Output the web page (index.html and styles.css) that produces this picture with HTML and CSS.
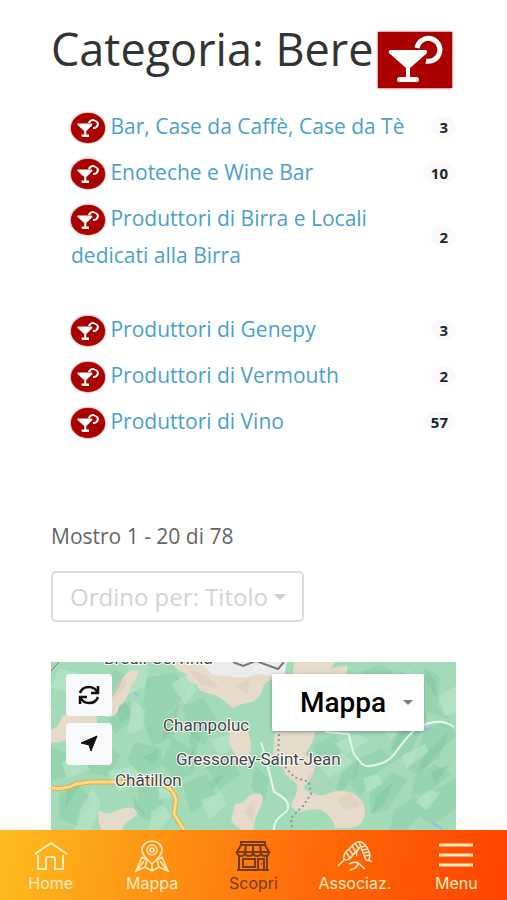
FILE: index.html
```
<!DOCTYPE html>
<html lang="it">
<head>
  <meta charset="UTF-8" />
  <meta name="viewport" content="width=device-width, initial-scale=1.0"/>
  <title>Categoria: Bere</title>
  <link rel="stylesheet" href="styles.css">
</head>
<body>

  <!-- shared cocktail glass -->
  <svg class="defs" width="0" height="0" aria-hidden="true">
    <symbol id="drink" viewBox="0 0 74 56">
      <path d="M39 16a11.500 11.500 0 1 1 9 13" fill="none" stroke="#fff" stroke-width="5"/>
      <path d="M12 18h36q2 2 0 4L32 36v9h6q3 0 3 2.500t-3 2.500H22q-3 0-3-2.500t3-2.500h6v-9L11 21q-1-2 1-3z" fill="#fff"/>
    </symbol>
    <symbol id="drink-small" viewBox="0 0 26 20">
      <path d="M14 5a4.500 4 0 1 1 4 5" fill="none" stroke="#fff" stroke-width="2.200"/>
      <path d="M2.500 5.500h14.500l.5 1.500-6.200 6v3.500h2.700v2.500H6.500v-2.500h2.700V13L2.500 7z" fill="#fff"/>
    </symbol>
  </svg>

  <main>
    <h1>Categoria: Bere <svg class="cat-icon"><use href="#drink"/></svg></h1>

    <ul class="categories">
      <li><a href="#bar"><svg class="dot"><use href="#drink-small"/></svg> Bar, Case da Caffè, Case da Tè</a><span class="badge">3</span></li>
      <li><a href="#enoteche"><svg class="dot"><use href="#drink-small"/></svg> Enoteche e Wine Bar</a><span class="badge">10</span></li>
      <li class="tall"><a href="#birra"><svg class="dot"><use href="#drink-small"/></svg> Produttori di Birra e Locali dedicati alla Birra</a><span class="badge">2</span></li>
      <li><a href="#genepy"><svg class="dot"><use href="#drink-small"/></svg> Produttori di Genepy</a><span class="badge">3</span></li>
      <li><a href="#vermouth"><svg class="dot"><use href="#drink-small"/></svg> Produttori di Vermouth</a><span class="badge">2</span></li>
      <li><a href="#vino"><svg class="dot"><use href="#drink-small"/></svg> Produttori di Vino</a><span class="badge">57</span></li>
    </ul>

    <p class="results">Mostro 1 - 20 di 78</p>

    <div class="sort">
      <select aria-label="Ordinamento">
        <option>Ordino per: Titolo</option>
      </select>
    </div>

    <section class="map" aria-label="Mappa">
      <svg class="terrain" viewBox="0 0 405 168" preserveAspectRatio="xMidYMin slice">
        <rect width="405" height="168" fill="#a3dbb9"/>
        <!-- shaded valleys -->
        <g fill="#8fcfaa" opacity=".6">
          <path d="M62 8l18 6-8 24 12 18-20 16-10-22zM96 16l28-6 12 22-20 20 8 22-22 10-12-30zM132 44l20-8 14 20-12 28-18-14zM30 94l22-14 18 14-14 20-26-4zM84 80l26 6 2 18-22 8-14-14zM122 76l24 14-4 22-18 6-14-18z"/>
          <path d="M0 84l16 8 4 22-20 4zM8 132l20-8 14 14-16 26-18-8zM88 124l16-4 10 22-14 18-14-14zM132 122l24-10 8 20-24 20zM152 100l26-6 12 18-22 16zM204 104l14 12-4 24-14-14z"/>
          <path d="M262 84l22-12 6 20-18 14zM306 98l24-12 14 12-22 16-12 20-10-10zM340 80l18-22 14 4-12 28-18 10zM376 66l22-8 7 16-20 18-16 22-12-6zM318 132l24-22 14 8-20 30-16 4zM364 114l20-12 16 10-22 18-18 4z"/>
          <path d="M376 6l14 10-4 28 14 14-24-8zM384 128l21-12v30l-22 16-14-6zM310 10l20-8 12 8-14 6zM344 148l20-14 10 14-18 20h-18z"/>
        </g>
        <g fill="#b5e4c7" opacity=".7">
          <path d="M76 0l22 4-4 20-16 8zM82 38l12 10-2 20-16 4zM120 22l16-10 10 16-12 14zM10 100l20-4 10 12-24 8zM56 110l24-6 10 10-22 16zM106 112l20 6-2 16-16 4zM160 78l20-6 6 12-18 10z"/>
          <path d="M268 104l24-14 10 10-24 16zM284 82l20-10 14 6-22 14zM330 66l16-10 8 4-14 18zM388 34l17-10v26l-12 4zM350 94l24-12 4 8-22 16zM312 116l14-4 6 10-16 8zM364 140l14-12 12 2-14 18zM342 22l16-14 12 4-12 18zM8 6l20 6-12 18-16-4zM30 146l12-20 8 16-10 26H24zM100 150l12-8 8 12-10 14H98zM150 138l20-8 6 12-18 16z"/>
        </g>
        <g fill="#79c397" opacity=".35">
          <path d="M66 48l12-10 2 14-10 10zM112 58l16-16-4 24-12 12zM142 64l8 12-8 18-4-18zM92 96l16-10-4 16zM16 124l14-2-16 24zM156 120l18-8-12 16zM290 112l20-18-6 22-20 20zM350 68l14-14-6 22-20 16zM326 134l16-14-8 22-14 10zM374 92l24-22-10 26-22 14zM380 110l20-8-16 20zM372 4l12 14 2 18-10-14zM274 144l18-8-8 14zM82 132l8 14 8 14-14-10z"/>
        </g>
        <!-- bare rock -->
        <g fill="#e6dac9">
          <path d="M0 68q8-2 11-14 18-6 34-2l2 14q8 2 1 4-18 0-30 6-10 6-18 4zM52 42q14-8 18-22 4-12 18-12-2 10-8 16-4 16-12 20-2 14-14 10z"/>
          <path d="M122 0h110l3 14q-14 2-22 8-2 14-12 18-12 2-20 6-8-10-20-14-14-2-16-10-10-2-10-10-14-6-13-12z"/>
          <path d="M180 62q16 2 18 10 4 14 0 22l-6 6q-12-10-14-20z"/>
          <path d="M50 168q-4-12-2-20 8 6 14 2 12-6 20-4 6 4 3 8-12 6-14 14zM184 142q8 0 12-6 4-6 14-4 4 2 0 12-6 10-8 24h-12q-12-8-9-14z"/>
          <path d="M224 70h40q-2 12-10 22l10 8q0 12-6 18-4 6-6 8 14 10 24 6 12-6 22-2 14 4 16 18 0 16-14 18h-16q-4-14-14-18-12-2-20 2-10-2-10-8 8-12 6-20-12-8-14-16-10-8-10-16z"/>
          <path d="M244 0h40q-4 8-12 10l-8 10h-20q-4-12 0-20zM258 18q16-14 38-14 2 8-6 14z"/>
        </g>
        <g fill="#d8c7b4" opacity=".4"><path d="M60 30l12-16 4 8-14 18zM136 6l20 8 14 14-20-6zM182 24l18-8-4 16zM258 108l16 20-18-8zM286 136l14-4 10 12-18 4zM192 150l12-12-2 20z"/></g>
        <path d="M148 0h88l-4 20q-12-8-26-8-14 6-28 2-20 0-20-5z" fill="#ebedec"/>
        <g fill="none">
          <path d="M182 0l10 4 13-5 22 8 6-7" stroke="#777" stroke-width="2"/>
          <path d="M0 9L8 0" stroke="#777"/>
          <path d="M228 72l-1 22 8 12 8 9 15 5 2 12-8 12-12 12 1 12" stroke="#8b9990" stroke-width="2" stroke-dasharray="2 3"/>
          <path d="M210 80q4 12 13 50 20 10 12 20-13 8-12 18M274 70l24 2q2 12 5 20l8 10q4 3 8 2 18-2 26-14 14-20 22-24 20-12 36-1" stroke="#e7f7ed" stroke-width="2"/>
          <path d="M0 126q14 2 25-4l14-2h54q28-1 32 18l-2 14 10 16" stroke="#dfae4d" stroke-width="5"/>
          <path d="M0 126q14 2 25-4l14-2h54q28-1 32 18l-2 14 10 16" stroke="#ffda82" stroke-width="3"/>
          <path d="M83 30l5 4M374 68l7-3M381 161l10 6" stroke="#8bbff0" stroke-width="2"/>
        </g>
        <g class="towns">
          <text x="53" y="2">Breuil-Cervinia</text>
          <text x="112" y="69">Champoluc</text>
          <text x="125" y="103">Gressoney-Saint-Jean</text>
          <text x="64" y="124">Châtillon</text>
        </g>
      </svg>

      <div class="map-controls">
        <div class="map-buttons">
          <button aria-label="Aggiorna">
            <svg width="24" height="20" viewBox="0 0 24 20" fill="none" stroke="#111" stroke-width="2.500">
              <path d="M3 8q2-6 9-6 6 0 9 6M21 1v7h-7M21 12q-2 6-9 6-6 0-9-6M3 19v-7h7"/>
            </svg>
          </button>
          <button aria-label="La mia posizione">
            <svg width="20" height="18" viewBox="0 0 20 18"><path d="M18 1L2 8l8 2 2 6z" fill="#111" stroke="#111" stroke-linejoin="round"/></svg>
          </button>
        </div>
        <div class="map-type">
          <select aria-label="Tipo di mappa">
            <option>Mappa</option>
          </select>
        </div>
      </div>
    </section>
  </main>

  <nav>
    <a href="#home">
      <svg viewBox="0 0 36 32"><path d="M2 14L18 3l16 11M5 15v14h8V19q0-2 2-2h5q2 0 2 2v10h8V15"/></svg>
      Home
    </a>
    <a href="#mappa">
      <svg class="thin" viewBox="0 0 36 32"><path d="M18 24Q8 15 8 10a10 9 0 0 1 20 0q0 5-10 14z"/><circle cx="18" cy="10" r="5"/><circle cx="18" cy="10" r="2"/><path d="M8 17L2 31l9-4 7 4 7-4 9 4-6-14-5 3M8 17l5 3M11 27l2-7M25 27l-2-7M18 24v7M4 29l6-8M32 29l-6-8"/></svg>
      Mappa
    </a>
    <a href="#scopri" class="active">
      <svg viewBox="0 0 36 32"><path d="M6 2h24v3H6zM6 5l-4 7h32l-4-7M11 5l-1 7M18 5v7M25 5l1 7M2 12q0 4 4 4t4-4q0 4 4 4t4-4q0 4 4 4t4-4q0 4 4 4t4-4M4 16v14M32 16v14M2 30h32M8 19h12v8H8zM23 30V19h6v11M26 24h1"/></svg>
      Scopri
    </a>
    <a href="#associazioni">
      <svg class="thin" viewBox="0 0 36 32"><path d="M1 26l7-7M7 20q-1-5 2-8l8-8q4-4 9-1 5 4 7 12l-1 5 3 2M8 20q4 0 7-4l8-9M9 12l4 6M12 9l4 6M15 6l4 6M18 3l4 6M22 2l2 5M23 7q-5 6-3 9M24 7l5-1M25 10l6-1M26 13l6-1M27 16l6-1M24 8l5 12 3 1M13 30q8-2 8-7l7 6M12 24q5-3 9-1"/></svg>
      Associaz.
    </a>
    <a href="#menu">
      <svg class="bars" viewBox="0 0 36 32"><path d="M1 5h34M1 15h34M1 25h34"/></svg>
      Menu
    </a>
  </nav>

</body>
</html>
```
FILE: styles.css
```
:root {
  --red: #aa0000;
  --link: #4a9fd0;
  --text: #333;
}

* {
  box-sizing: border-box;
}

body {
  margin: 0;
  min-height: 100vh;
  display: flex;
  flex-direction: column;
  background: #fff;
  color: var(--text);
  font-family: 'Open Sans', 'Noto Sans', sans-serif;
}

.defs {
  position: absolute;
}

main {
  flex: 1;
  display: flex;
  flex-direction: column;
  padding: 20px 51px 0;
}

h1 {
  display: flex;
  align-items: flex-start;
  gap: 5px;
  margin: 0;
  font-size: 45px;
  line-height: 58px;
  font-weight: 400;
  white-space: nowrap;
}

.cat-icon {
  flex: none;
  width: 74px;
  height: 56px;
  margin-top: 12px;
  background: var(--red);
  box-shadow: 0 0 2px var(--red);
}

.categories {
  list-style: none;
  display: flex;
  flex-direction: column;
  gap: 9px;
  margin: 20px 0 0;
  padding: 0 0 0 20px;
}

.categories li {
  display: flex;
  align-items: center;
  justify-content: space-between;
  font-size: 21px;
  line-height: 37px;
}

.categories .tall {
  margin-bottom: 28px;
}

.categories a {
  color: var(--link);
  text-decoration: none;
}

.dot {
  width: 34px;
  height: 30px;
  padding: 5px 4px;
  border-radius: 50%;
  background: var(--red);
  vertical-align: middle;
  box-shadow: 0 0 2px var(--red);
}

.badge {
  padding: 0 8px;
  border-radius: 10px;
  background: #f8f9fa;
  color: #212529;
  font-size: 15px;
  line-height: 20px;
  font-weight: 700;
}

.results {
  margin: 82px 0 0;
  color: #666;
  font-size: 21px;
  line-height: 28px;
}

.sort {
  display: flex;
  align-items: center;
  align-self: flex-start;
  margin: 21px 0 40px;
}

select {
  appearance: none;
  border: none;
  background: transparent;
  font-family: inherit;
}

.sort select {
  height: 51px;
  padding: 0 34px 0 17px;
  border: 2px solid #ddd;
  border-radius: 5px;
  color: #d3d3d3;
  font-size: 24px;
}

.sort::after,
.map-type::after {
  content: "";
  border: 6px solid transparent;
  border-top-color: #ccc;
  border-bottom: 0;
  margin-left: -30px;
  margin-right: 18px;
  pointer-events: none;
}

.map {
  flex: 1;
  display: grid;
  min-height: 168px;
  overflow: hidden;
}

.terrain,
.map-controls {
  grid-area: 1 / 1;
}

.terrain {
  width: 100%;
  height: 100%;
}

.towns {
  font-family: Roboto, sans-serif;
  font-size: 17px;
  fill: #444;
  stroke: #fff;
  stroke-width: 2px;
  stroke-linejoin: round;
  paint-order: stroke;
}

.map-controls {
  z-index: 1;
  display: flex;
  justify-content: space-between;
  align-items: flex-start;
  padding: 12px 32px 0 15px;
}

.map-buttons {
  display: grid;
  gap: 7px;
}

.map-buttons button {
  display: grid;
  place-items: center;
  width: 46px;
  height: 42px;
  padding: 0;
  border: none;
  border-radius: 4px;
  background: #f8f9fa;
}

.map-type {
  display: flex;
  align-items: center;
  background: #fff;
  border-radius: 2px;
  box-shadow: 0 1px 4px rgba(0, 0, 0, 0.3);
}

.map-type select {
  height: 57px;
  padding: 0 37px 0 28px;
  color: #000;
  font-family: Roboto, sans-serif;
  font-size: 28px;
  font-weight: 500;
}

.map-type::after {
  border-width: 5px;
  border-bottom: 0;
  border-top-color: #777;
  margin-left: -21px;
  margin-right: 11px;
}

nav {
  position: sticky;
  bottom: 0;
  z-index: 2;
  display: grid;
  grid-template-columns: repeat(5, 1fr);
  height: 70px;
  padding-top: 9px;
  background: linear-gradient(100deg, #fdbd1d, #ff8010 45%, #ff6a08 62%, #ff4300);
}

nav a {
  display: flex;
  flex-direction: column;
  align-items: center;
  color: #ffeac0;
  font-family: Inter, sans-serif;
  font-size: 16px;
  line-height: 20px;
  text-decoration: none;
}

nav svg {
  width: 36px;
  height: 34px;
  fill: none;
  stroke: currentColor;
  stroke-width: 2;
}

nav .thin {
  stroke-width: 1.500;
}

nav .bars {
  stroke-width: 3;
}

nav .active {
  color: #763b0c;
}
```
